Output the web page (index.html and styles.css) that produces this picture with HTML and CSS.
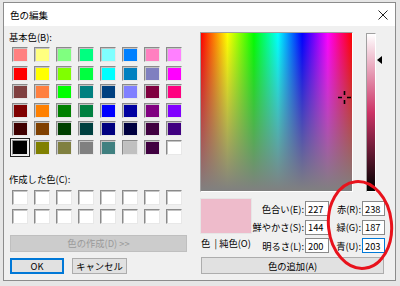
FILE: index.html
```html
<!DOCTYPE html>
<html lang="ja">
<head>
  <meta charset="UTF-8">
  <title>色の編集</title>
  <link rel="stylesheet" href="styles.css">
</head>
<body>

  <div class="window">
    <!-- Title bar -->
    <div class="titlebar">
      <span class="title">色の編集</span>
      <svg class="close" width="10" height="10" viewBox="0 0 10 10">
        <path d="M0.5 0.5 L9.5 9.5 M9.5 0.5 L0.5 9.5" stroke="#222" stroke-width="1" fill="none"/>
      </svg>
    </div>

    <div class="content">
      <!-- Left: swatches -->
      <div class="left">
        <div class="label">基本色(B):</div>
        <div class="swatches">
          <div class="swatch" style="background:#ff8080"></div>
          <div class="swatch" style="background:#ffff80"></div>
          <div class="swatch" style="background:#80ff80"></div>
          <div class="swatch" style="background:#00ff80"></div>
          <div class="swatch" style="background:#80ffff"></div>
          <div class="swatch" style="background:#0080ff"></div>
          <div class="swatch" style="background:#ff80c0"></div>
          <div class="swatch" style="background:#ff80ff"></div>

          <div class="swatch" style="background:#ff0000"></div>
          <div class="swatch" style="background:#ffff00"></div>
          <div class="swatch" style="background:#80ff00"></div>
          <div class="swatch" style="background:#00ff40"></div>
          <div class="swatch" style="background:#00ffff"></div>
          <div class="swatch" style="background:#0080c0"></div>
          <div class="swatch" style="background:#8080c0"></div>
          <div class="swatch" style="background:#ff00ff"></div>

          <div class="swatch" style="background:#804040"></div>
          <div class="swatch" style="background:#ff8040"></div>
          <div class="swatch" style="background:#00ff00"></div>
          <div class="swatch" style="background:#008080"></div>
          <div class="swatch" style="background:#004080"></div>
          <div class="swatch" style="background:#8080ff"></div>
          <div class="swatch" style="background:#800040"></div>
          <div class="swatch" style="background:#ff0080"></div>

          <div class="swatch" style="background:#800000"></div>
          <div class="swatch" style="background:#ff8000"></div>
          <div class="swatch" style="background:#008000"></div>
          <div class="swatch" style="background:#008040"></div>
          <div class="swatch" style="background:#0000ff"></div>
          <div class="swatch" style="background:#0000a0"></div>
          <div class="swatch" style="background:#800080"></div>
          <div class="swatch" style="background:#8000ff"></div>

          <div class="swatch" style="background:#400000"></div>
          <div class="swatch" style="background:#804000"></div>
          <div class="swatch" style="background:#004000"></div>
          <div class="swatch" style="background:#004040"></div>
          <div class="swatch" style="background:#000080"></div>
          <div class="swatch" style="background:#000040"></div>
          <div class="swatch" style="background:#400040"></div>
          <div class="swatch" style="background:#400080"></div>

          <div class="swatch selected" style="background:#000000"></div>
          <div class="swatch" style="background:#808000"></div>
          <div class="swatch" style="background:#808040"></div>
          <div class="swatch" style="background:#808080"></div>
          <div class="swatch" style="background:#408080"></div>
          <div class="swatch" style="background:#c0c0c0"></div>
          <div class="swatch" style="background:#400040"></div>
          <div class="swatch" style="background:#ffffff"></div>
        </div>

        <div class="label custom-label">作成した色(C):</div>
        <div class="swatches custom">
          <div class="swatch"></div><div class="swatch"></div><div class="swatch"></div><div class="swatch"></div>
          <div class="swatch"></div><div class="swatch"></div><div class="swatch"></div><div class="swatch"></div>
          <div class="swatch"></div><div class="swatch"></div><div class="swatch"></div><div class="swatch"></div>
          <div class="swatch"></div><div class="swatch"></div><div class="swatch"></div><div class="swatch"></div>
        </div>

        <button class="btn define" disabled>色の作成(D) &gt;&gt;</button>
        <div class="actions">
          <button class="btn ok">OK</button>
          <button class="btn cancel">キャンセル</button>
        </div>
      </div>

      <!-- Right: picker -->
      <div class="right">
        <div class="picker">
          <div class="spectrum">
            <svg class="cross" width="13" height="13" viewBox="0 0 13 13">
              <path d="M0 6.5 H4 M9 6.5 H13 M6.5 0 V4 M6.5 9 V13" stroke="#000" stroke-width="1.6" fill="none"/>
            </svg>
          </div>
          <div class="lum-wrap">
            <div class="lum"></div>
            <span class="arrow"></span>
          </div>
        </div>

        <div class="mid">
          <div class="preview-col">
            <div class="preview"></div>
            <div class="preview-label">色 &nbsp;| 純色(O)</div>
          </div>
          <div class="fields hsl">
            <div class="field"><label>色合い(E):</label><input type="text" value="227"></div>
            <div class="field"><label>鮮やかさ(S):</label><input type="text" value="144"></div>
            <div class="field"><label>明るさ(L):</label><input type="text" value="200"></div>
          </div>
          <div class="fields rgb">
            <div class="field"><label>赤(R):</label><input type="text" value="238"></div>
            <div class="field"><label>緑(G):</label><input type="text" value="187"></div>
            <div class="field"><label>青(U):</label><input type="text" value="203" class="focused"></div>
          </div>
        </div>

        <button class="btn add">色の追加(A)</button>
      </div>
    </div>
  </div>

  <!-- Red annotation ring -->
  <svg class="mark" width="70" height="96" viewBox="0 0 70 96">
    <ellipse cx="34" cy="46" rx="31.5" ry="43.5" transform="rotate(-6 34 46)" fill="none" stroke="#e8121c" stroke-width="3"/>
  </svg>

</body>
</html>
```

FILE: styles.css
```css
body {
  margin: 0;
  padding: 2px 0 0 3px;
  background-color: #e6e6e6;
  font-family: 'Noto Sans CJK JP', 'Noto Sans', sans-serif;
  font-size: 9.3px;
  color: #000;
  position: relative;
  height: 286px;
  box-sizing: border-box;
  overflow: hidden;
}

.window {
  width: 393px;
  height: 279px;
  box-sizing: border-box;
  border: 1px solid #8c8c8c;
  background-color: #f0f0f0;
  display: flex;
  flex-direction: column;
}

/* Title bar */
.titlebar {
  height: 23px;
  background-color: #fff;
  display: flex;
  align-items: center;
  justify-content: space-between;
  padding: 0 7px 0 6px;
}

.title {
  font-size: 9.5px;
  line-height: 12px;
}

.content {
  flex: 1;
  display: flex;
}

/* Left column */
.left {
  width: 196px;
  padding: 5px 0 0 5px;
  box-sizing: border-box;
}

.label {
  line-height: 12px;
  height: 12px;
}

.swatches {
  display: grid;
  grid-template-columns: repeat(8, 16px);
  grid-auto-rows: 15px;
  column-gap: 6px;
  row-gap: 3.6px;
  margin: 4px 0 0 3px;
}

.swatch {
  box-sizing: border-box;
  border: 1px solid;
  border-color: #8a8a8a #e8e8e8 #e8e8e8 #8a8a8a;
  box-shadow: inset 1px 1px 0 #c4c4c4;
}

.swatches.custom {
  row-gap: 4px;
  margin-top: 5px;
}

.swatches.custom .swatch {
  background-color: #fff;
}

.swatch.selected {
  box-shadow: 0 0 0 1px #f0f0f0, 0 0 0 2px #222;
}

.custom-label {
  margin-top: 18px;
}

.btn {
  font-family: inherit;
  font-size: 9.3px;
  color: #000;
  background-color: #e1e1e1;
  border: 1px solid #adadad;
  padding: 0;
  box-sizing: border-box;
  line-height: 12px;
}

.btn.define {
  display: block;
  width: 177px;
  height: 17px;
  margin: 11px 0 0 1px;
  background-color: #cccccc;
  border-color: #bfbfbf;
  color: #9a9a9a;
}

.actions {
  display: flex;
  gap: 8px;
  margin: 6px 0 0 1px;
}

.btn.ok {
  width: 54px;
  height: 16px;
  border: 1px solid #0078d7;
  box-shadow: inset 0 0 0 1px #0078d7;
}

.btn.cancel {
  width: 55px;
  height: 16px;
}

/* Right column */
.right {
  padding-top: 6px;
}

.picker {
  display: flex;
  align-items: flex-start;
}

.spectrum {
  width: 153px;
  height: 160px;
  box-sizing: border-box;
  border: 1px solid;
  border-color: #a0a0a0 #fff #fff #a0a0a0;
  background:
    linear-gradient(to bottom, rgba(128, 128, 128, 0), #808080),
    linear-gradient(to right, #ff0000, #ffff00 17.5%, #00ff00 35%, #00ffff 51%, #0000ff 67%, #ff00ff 84%, #ff0000);
  position: relative;
}

.cross {
  position: absolute;
  left: 137px;
  top: 58px;
}

.lum-wrap {
  margin: 1px 0 0 13px;
  display: flex;
  align-items: flex-start;
  position: relative;
}

.lum {
  width: 10px;
  height: 159px;
  box-sizing: border-box;
  border: 1px solid;
  border-color: #a0a0a0 #fff #fff #a0a0a0;
  background: linear-gradient(to bottom, #fff, #cc3366 50%, #000);
}

.arrow {
  position: absolute;
  left: 11px;
  top: 23px;
  width: 0;
  height: 0;
  border-top: 4px solid transparent;
  border-bottom: 4px solid transparent;
  border-right: 5px solid #000;
}

.mid {
  display: flex;
  align-items: flex-start;
  margin-top: 6px;
}

.preview-col {
  width: 52px;
}

.preview {
  height: 36px;
  background-color: #eebbcb;
  border: 1px solid #e6e6e6;
  box-sizing: border-box;
}

.preview-label {
  margin-top: 3px;
  line-height: 12px;
  text-align: center;
  white-space: nowrap;
}

.fields {
  display: flex;
  flex-direction: column;
  gap: 3.5px;
  margin-top: 3px;
}

.field {
  display: flex;
  align-items: center;
  height: 15px;
}

.field label {
  text-align: right;
  margin-right: 1px;
  white-space: nowrap;
}

.hsl label {
  width: 52px;
}

.rgb label {
  width: 32px;
}

.field input {
  width: 24px;
  height: 15px;
  box-sizing: border-box;
  border: 1px solid #8a8a8a;
  background-color: #fff;
  font-family: inherit;
  font-size: 9.3px;
  padding: 0 0 0 2px;
  margin: 0;
  outline: none;
}

.rgb input {
  width: 23px;
}

.field input.focused {
  border-color: #0078d7;
}

.btn.add {
  display: block;
  width: 183px;
  height: 17px;
  margin: 4px 0 0 1px;
}

/* Annotation */
.mark {
  position: absolute;
  left: 326px;
  top: 179px;
}
```
